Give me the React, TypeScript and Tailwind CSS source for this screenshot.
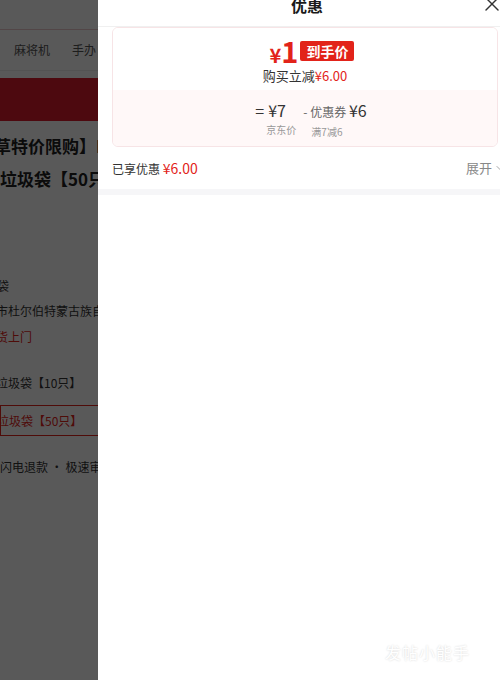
import { X, ChevronDown } from "lucide-react";

const font = { fontFamily: '"Noto Sans CJK SC", "Noto Sans", sans-serif' };

function BackPage() {
  return (
    <div className="flex h-full w-full flex-col bg-white text-[#333]">
      <div className="h-[30px] shrink-0 border-b border-[#ecc9cc] bg-white" />
      <div className="flex h-[41px] shrink-0 items-center gap-[22px] border-b border-[#eeeeee] pl-[14px] text-[12px] text-[#555]">
        <span>麻将机</span>
        <span>手办</span>
      </div>
      <div className="mt-[7px] h-[43px] shrink-0 bg-[#dc1c2b]" />
      <div className="-ml-[6px] mt-[8px] text-[17px] font-bold leading-[33px] text-[#222]">
        <p className="whitespace-nowrap">草特价限购】LI</p>
        <p className="ml-[6px] whitespace-nowrap">垃圾袋【50只】</p>
      </div>
      <div className="mt-[78px] flex flex-col text-[12px] text-[#333]">
        <p className="-ml-[3px] leading-[25px]">袋</p>
        <p className="-ml-[4px] whitespace-nowrap leading-[26px]">市杜尔伯特蒙古族自治县</p>
        <p className="-ml-[4px] leading-[26px] text-[#e2231a]">货上门</p>
        <p className="-ml-[4px] mt-[20px] whitespace-nowrap leading-[26px]">垃圾袋【10只】</p>
        <div className="mt-[9px] flex h-[31px] items-center border border-[#e2231a] text-[#e2231a]">
          <span className="-ml-[4px] whitespace-nowrap">垃圾袋【50只】</span>
        </div>
        <p className="mt-[18px] whitespace-nowrap leading-[26px]">闪电退款 · 极速审核</p>
      </div>
    </div>
  );
}

function Drawer() {
  return (
    <div className="absolute left-[98px] top-0 flex h-full w-[402px] flex-col bg-white">
      <div className="flex h-[27px] shrink-0 items-start border-b border-[#f0f0f0]">
        <div className="flex-1" />
        <p className="-mt-[7px] ml-[16px] text-[16px] font-bold leading-[24px] text-[#1a1a1a]">优惠</p>
        <div className="flex flex-1 justify-end">
          <X className="-mr-[4px] -mt-[8px] h-[24px] w-[24px] text-[#333]" strokeWidth={1.4} />
        </div>
      </div>

      <div className="ml-[14px] mr-[2px] overflow-hidden rounded-[6px] border border-[#f7e4e6]">
        <div className="flex h-[62px] flex-col items-center bg-white pt-[6px]">
          <div className="ml-[14px] flex h-[32px] items-center gap-[2px]">
            <span className="flex items-baseline font-bold leading-none text-[#e2231a]">
              <span className="text-[20px]">¥</span>
              <span className="text-[29px]">1</span>
            </span>
            <span className="mt-[2px] rounded-[2px] bg-[#e2231a] px-[6px] text-[14px] font-bold leading-[20px] text-white">到手价</span>
          </div>
          <p className="mt-[1px] text-[13px] leading-[18px] text-[#333]">
            购买立减<span className="text-[#e2231a]">¥6.00</span>
          </p>
        </div>
        <div className="flex h-[56px] items-start justify-center bg-[#fff8f8] pt-[10px]">
          <div className="ml-[12px] flex items-start">
            <div className="flex flex-col">
              <p className="text-[16px] leading-[20px] text-[#333]">
                <span className="mr-[4px]">=</span>¥7
              </p>
              <p className="ml-[11px] text-[10px] leading-[20px] text-[#999]">京东价</p>
            </div>
            <div className="ml-[7px] flex flex-col">
              <p className="leading-[20px] text-[#333]">
                <span className="text-[12px] text-[#666]">- 优惠券 </span>
                <span className="text-[16px]">¥6</span>
              </p>
              <p className="ml-[8px] text-[10px] leading-[20px] text-[#999]">满7减6</p>
            </div>
          </div>
        </div>
      </div>

      <div className="flex h-[42px] shrink-0 items-center justify-between pl-[14px]">
        <p className="text-[12px] text-[#333]">
          已享优惠 <span className="text-[14px] text-[#e2231a]">¥6.00</span>
        </p>
        <span className="-mr-[6px] flex items-center gap-[2px] text-[13px] text-[#888]">
          展开
          <ChevronDown className="h-[12px] w-[12px]" strokeWidth={1.5} />
        </span>
      </div>
      <div className="h-[6px] shrink-0 bg-[#f6f6f8]" />
      <div className="flex-1 bg-white" />
    </div>
  );
}

export default function App() {
  return (
    <div className="relative h-[680px] w-[500px] overflow-hidden" style={font}>
      <BackPage />
      <div className="absolute inset-0 bg-black/65" />
      <Drawer />
      <p className="absolute bottom-[16px] right-[30px] text-[16px] tracking-[1px] text-white [text-shadow:0_0_2px_rgba(0,0,0,0.18)]">
        发帖小能手
      </p>
    </div>
  );
}
